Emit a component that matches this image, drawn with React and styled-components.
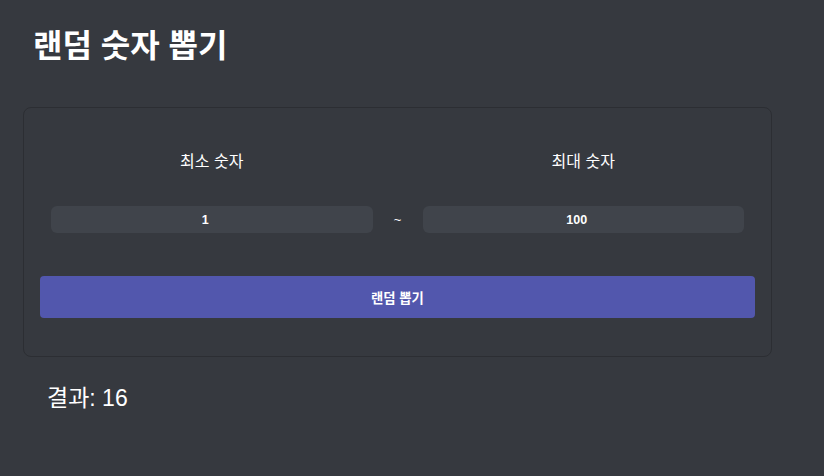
import React, { useState } from "react";
import styled, { createGlobalStyle } from "styled-components";

const Global = createGlobalStyle`
  html, body { margin: 0; padding: 0; background: #36393f; }
  body {
    font-family: "Liberation Sans", "Noto Sans CJK KR", sans-serif;
    color: #ffffff;
    width: 824px;
    height: 476px;
    overflow: hidden;
  }
`;

const Page = styled.div`
  padding: 0 52px 0 23px;
`;

const Title = styled.h1`
  margin: 0;
  padding: 24px 0 0 10px;
  height: 107px;
  box-sizing: border-box;
  font-size: 32px;
  font-weight: 700;
  line-height: 44px;
  color: #ffffff;
`;

const Card = styled.div`
  border: 1px solid #2c2e33;
  border-radius: 8px;
  padding: 16px 16px 38px;
  display: flex;
  flex-direction: column;
  gap: 43px;
`;

const RangeRow = styled.div`
  display: flex;
  align-items: flex-end;
  padding: 0 11px;
`;

const Field = styled.div`
  flex: 1;
  display: flex;
  flex-direction: column;
  align-items: stretch;
  gap: 34px;
  padding-top: 27px;
`;

const Label = styled.div`
  text-align: center;
  font-size: 16px;
  line-height: 21px;
  color: #ffffff;
`;

const Input = styled.input`
  height: 27px;
  box-sizing: border-box;
  border: none;
  border-radius: 6px;
  padding: 0 15px 0 2px;
  background: #40444b;
  color: #ffffff;
  text-align: center;
  font-family: "Liberation Sans", sans-serif;
  font-weight: 700;
  font-size: 12.5px;
  outline: none;
`;

const Tilde = styled.div`
  width: 50px;
  height: 27px;
  line-height: 27px;
  text-align: center;
  font-size: 13px;
  color: #ffffff;
`;

const DrawButton = styled.button`
  height: 42px;
  border: none;
  border-radius: 4px;
  background: #5257ad;
  color: #ffffff;
  font-family: "Liberation Sans", "Noto Sans CJK KR", sans-serif;
  font-weight: 700;
  font-size: 13.33px;
  cursor: pointer;
`;

const Result = styled.div`
  padding: 26px 0 0 24px;
  font-size: 23px;
  line-height: 30px;
  color: #ffffff;
`;

export default function App() {
  const [min, setMin] = useState("1");
  const [max, setMax] = useState("100");
  const [result, setResult] = useState(16);

  const draw = () => {
    const a = parseInt(min, 10) || 0;
    const b = parseInt(max, 10) || 0;
    const lo = Math.min(a, b);
    const hi = Math.max(a, b);
    setResult(lo + Math.floor(Math.random() * (hi - lo + 1)));
  };

  return (
    <Page>
      <Global />
      <Title>랜덤 숫자 뽑기</Title>
      <Card>
        <RangeRow>
          <Field>
            <Label>최소 숫자</Label>
            <Input value={min} onChange={(e) => setMin(e.target.value)} />
          </Field>
          <Tilde>~</Tilde>
          <Field>
            <Label>최대 숫자</Label>
            <Input value={max} onChange={(e) => setMax(e.target.value)} />
          </Field>
        </RangeRow>
        <DrawButton onClick={draw}>랜덤 뽑기</DrawButton>
      </Card>
      <Result>결과: {result}</Result>
    </Page>
  );
}
